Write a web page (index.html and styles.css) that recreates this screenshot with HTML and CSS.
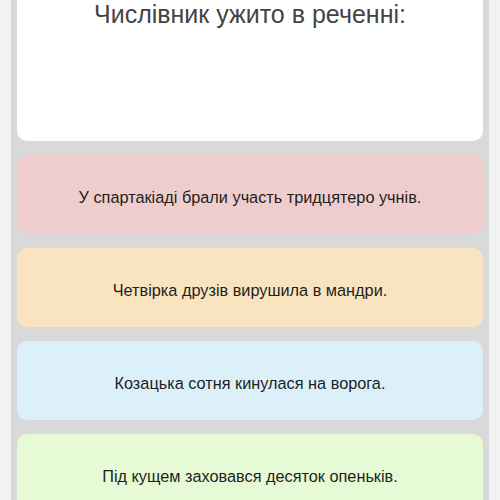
FILE: index.html
```html
<!DOCTYPE html>
<html lang="uk">
<head>
  <meta charset="UTF-8" />
  <title>Тест</title>
  <link rel="stylesheet" href="styles.css">
</head>
<body>
  <div class="panel">
    <div class="question">
      <h2>Числівник ужито в реченні:</h2>
    </div>
    <div class="answer red">У спартакіаді брали участь тридцятеро учнів.</div>
    <div class="answer orange">Четвірка друзів вирушила в мандри.</div>
    <div class="answer blue">Козацька сотня кинулася на ворога.</div>
    <div class="answer green">Під кущем заховався десяток опеньків.</div>
  </div>
</body>
</html>
```

FILE: styles.css
```css
body { margin: 0; background: #f2f2f2; font-family: "Liberation Sans", Arial, sans-serif; overflow: hidden; }
.panel { margin: 0 11px; background: #d9d9d9; padding: 0 6px 20px; height: 500px; box-sizing: border-box; }
.question { background: #fff; height: 141px; border-radius: 0 0 10px 10px; text-align: center; }
.question h2 { margin: 0; padding-top: 0; font-size: 25px; font-weight: normal; color: #444; }
.answer { margin-top: 14px; height: 79px; box-sizing: border-box; padding-top: 6px; border-radius: 10px; display: flex; align-items: center; justify-content: center; font-size: 16.3px; color: #1e1e1e; }
.red { background: #f0cdcd; }
.orange { background: #fae4bf; }
.blue { background: #dcf0fa; }
.green { background: #e6fbd5; }
```
